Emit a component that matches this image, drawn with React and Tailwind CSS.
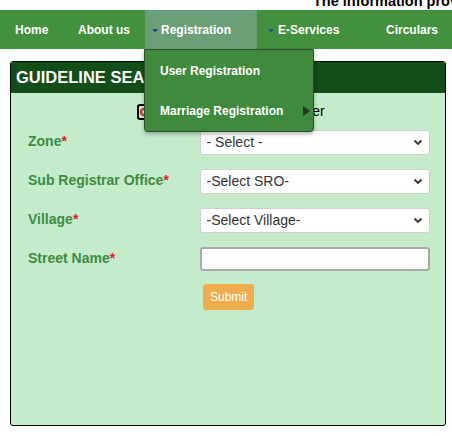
export default function App() {
  const fields = [
    { label: "Zone", kind: "select", value: "- Select -" },
    { label: "Sub Registrar Office", kind: "select", value: "-Select SRO-" },
    { label: "Village", kind: "select", value: "-Select Village-" },
    { label: "Street Name", kind: "input" },
  ];

  return (
    <div className="w-[452px] h-[436px] overflow-hidden bg-white font-['Liberation_Sans',Arial,sans-serif] relative">
      {/* top notice, clipped */}
      <div className="h-[10px] overflow-hidden relative">
        <div className="absolute left-[313px] top-[-7px] whitespace-nowrap text-[14.5px] font-bold text-black leading-[16px]">
          The information provided here is for reference only
        </div>
      </div>

      {/* Nav */}
      <nav className="h-[39px] bg-[#43903f] flex items-stretch text-white text-[12px] font-bold">
        <div className="pl-[15px] w-[63px] flex items-center">Home</div>
        <div className="pl-[15px] w-[82px] flex items-center">About us</div>
        <div className="w-[112px] bg-[#6b9f77] flex items-center pl-[7px] gap-[3px]">
          <Caret />
          <span>Registration</span>
        </div>
        <div className="w-[129px] flex items-center pl-[11px] gap-[4px]">
          <Caret />
          <span>E-Services</span>
        </div>
        <div className="flex items-center">Circulars</div>
      </nav>

      {/* Panel */}
      <div className="mt-[12px] mx-[10px] w-[436px] h-[365px] border border-black rounded-[3px] bg-[#c4ebca] overflow-hidden">
        <div className="h-[31px] bg-[#134d17] flex items-center px-[5px] text-white text-[16.5px] font-bold whitespace-nowrap">
          GUIDELINE SEARCH
        </div>
        <div className="pl-[16px] pr-[15px]">
          <div className="h-[37px] flex items-center pl-[110px] text-[14px] text-black">
            <span className="w-[14px] h-[16px] border-2 border-black rounded-[3px] bg-[#f4d6d6] flex items-center justify-center mr-[8px]">
              <span className="w-[8px] h-[8px] rounded-full border-2 border-[#c0392b]" />
            </span>
            <span className="whitespace-nowrap">Search By Survey Number</span>
          </div>
          <div className="flex flex-col gap-[14px]">
            {fields.map((f) => (
              <div key={f.label} className="flex items-center">
                <label className="w-[173px] pl-[1px] text-[14px] font-bold text-[#3e8b40] -mt-[2px]">
                  {f.label}
                  <span className="text-[#e11d1d]">*</span>
                </label>
                {f.kind === "select" ? (
                  <div className="w-[231px] h-[25px] bg-white border border-[#d0d0d0] rounded-[3px] flex items-center justify-between pl-[6px] pr-[6px] text-[14px] text-[#333]">
                    <span>{f.value}</span>
                    <svg width="10" height="7" viewBox="0 0 10 7">
                      <path d="M1.5 1.5 L5 5 L8.5 1.5" fill="none" stroke="#333" strokeWidth="1.8" />
                    </svg>
                  </div>
                ) : (
                  <div className="w-[231px] h-[24px] bg-white border-2 border-[#a9a9a9] rounded-[3px]" />
                )}
              </div>
            ))}
          </div>
          <div className="pl-[176px] mt-[13px]">
            <button className="h-[26px] px-[7px] bg-[#f0ad4e] text-white text-[12px] rounded-[3px]">
              Submit
            </button>
          </div>
        </div>
      </div>

      {/* Dropdown menu */}
      <div className="absolute left-[144px] top-[49px] w-[170px] h-[83px] bg-[#3f8a3d] border border-[#2b4a2b] rounded-b-[4px] shadow-[0_2px_4px_rgba(0,0,0,0.3)] text-white text-[12px] font-bold">
        <div className="h-[41px] flex items-center pl-[15px]">User Registration</div>
        <div className="h-[40px] flex items-center pl-[15px] pr-[3px] justify-between">
          <span>Marriage Registration</span>
          <svg width="7" height="10" viewBox="0 0 7 10">
            <path d="M0 0 L7 5 L0 10 Z" fill="#1f3a1f" />
          </svg>
        </div>
      </div>
    </div>
  );
}

function Caret() {
  return (
    <svg width="6" height="4" viewBox="0 0 6 4" className="mt-[2px]">
      <path d="M0 0 L6 0 L3 3.5 Z" fill="#1e4f8a" />
    </svg>
  );
}
